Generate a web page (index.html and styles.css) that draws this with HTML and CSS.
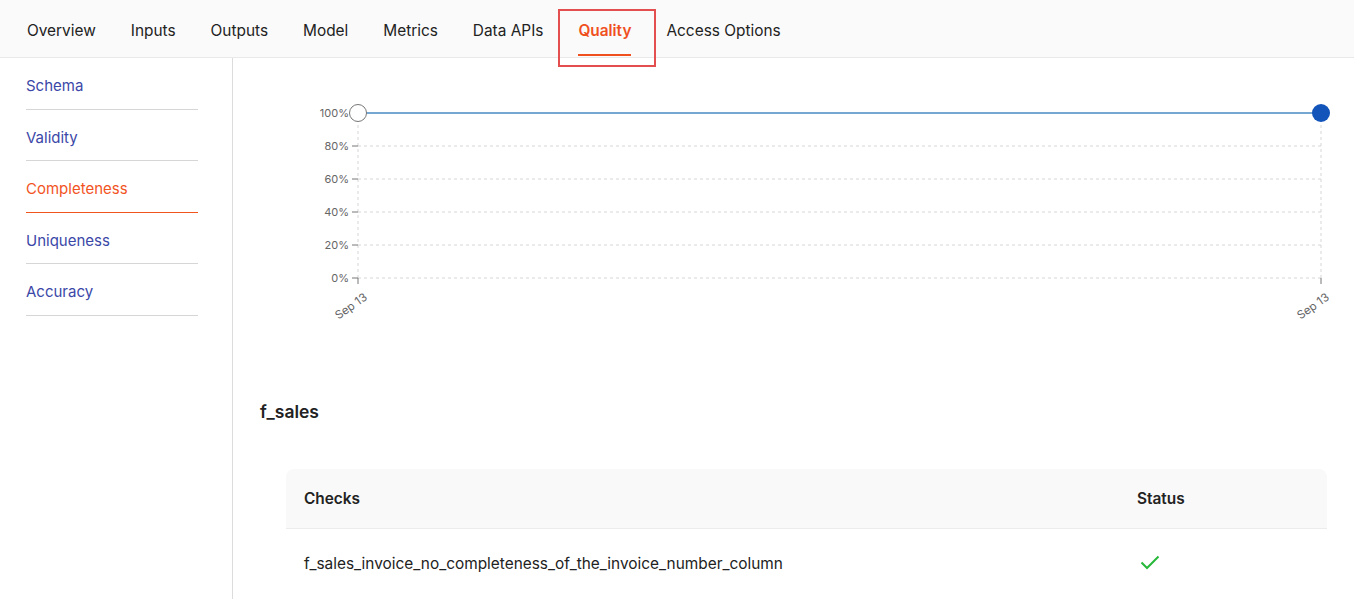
FILE: index.html
```html
<!DOCTYPE html>
<html>
<head>
<meta charset="utf-8">
<link rel="stylesheet" href="styles.css">
</head>
<body>
<nav class="tabs">
  <div class="tab">Overview</div>
  <div class="tab">Inputs</div>
  <div class="tab">Outputs</div>
  <div class="tab">Model</div>
  <div class="tab">Metrics</div>
  <div class="tab">Data APIs</div>
  <div class="tab active">Quality<span class="highlight"></span></div>
  <div class="tab">Access Options</div>
</nav>
<div class="layout">
  <aside class="sidebar">
    <div class="side-item">Schema</div>
    <div class="side-item">Validity</div>
    <div class="side-item active">Completeness</div>
    <div class="side-item">Uniqueness</div>
    <div class="side-item">Accuracy</div>
  </aside>
  <main class="main">
    <svg class="chart" width="1067" height="240" viewBox="0 0 1067 240">
      <g class="grid">
        <line x1="98" y1="56" x2="1061" y2="56"/>
        <line x1="98" y1="89" x2="1061" y2="89"/>
        <line x1="98" y1="122" x2="1061" y2="122"/>
        <line x1="98" y1="155" x2="1061" y2="155"/>
        <line x1="98" y1="188" x2="1061" y2="188"/>
        <line x1="98" y1="23" x2="98" y2="188"/>
        <line x1="1061" y1="23" x2="1061" y2="188"/>
      </g>
      <g class="ticks">
        <line x1="92" y1="56" x2="98" y2="56"/>
        <line x1="92" y1="89" x2="98" y2="89"/>
        <line x1="92" y1="122" x2="98" y2="122"/>
        <line x1="92" y1="155" x2="98" y2="155"/>
        <line x1="92" y1="188" x2="98" y2="188"/>
        <line x1="98" y1="188" x2="98" y2="194"/>
        <line x1="1061" y1="188" x2="1061" y2="194"/>
      </g>
      <g class="ylabels">
        <text x="89" y="27">100%</text>
        <text x="89" y="60">80%</text>
        <text x="89" y="93">60%</text>
        <text x="89" y="126">40%</text>
        <text x="89" y="159">20%</text>
        <text x="89" y="192">0%</text>
      </g>
      <g class="xlabels">
        <text x="108" y="209" transform="rotate(-35 108 209)">Sep 13</text>
        <text x="1070" y="209" transform="rotate(-35 1070 209)">Sep 13</text>
      </g>
      <line class="series" x1="98" y1="23" x2="1061" y2="23"/>
      <circle class="dot-open" cx="98" cy="23" r="8.5"/>
      <circle class="dot-fill" cx="1061" cy="23" r="9"/>
    </svg>
    <h2 class="section-title">f_sales</h2>
    <div class="table">
      <div class="row head">
        <div class="cell c-check">Checks</div>
        <div class="cell c-status">Status</div>
      </div>
      <div class="row">
        <div class="cell c-check">f_sales_invoice_no_completeness_of_the_invoice_number_column</div>
        <div class="cell c-status">
          <svg class="ok" width="20" height="16" viewBox="0 0 20 16"><path d="M1.5 7.5 L7 13 L18.5 1.5"/></svg>
        </div>
      </div>
    </div>
  </main>
</div>
</body>
</html>
```

FILE: styles.css
```css
* { box-sizing: border-box; }
html, body { margin: 0; padding: 0; }
body {
  font-family: Inter, "Noto Sans", sans-serif;
  color: #222;
  background: #fff;
  width: 1354px;
  height: 599px;
  overflow: hidden;
}
.tabs {
  display: flex;
  gap: 35px;
  height: 58px;
  padding-left: 27px;
  background: #fafafa;
  border-bottom: 1px solid #e9e9e9;
}
.tab {
  position: relative;
  font-size: 15.4px;
  line-height: 54px;
  padding-top: 4px;
  height: 57px;
  color: #222;
  white-space: nowrap;
}
.tab.active {
  color: #f0501e;
  font-weight: 600;
}
.tab.active::after {
  content: "";
  position: absolute;
  left: 0;
  right: 0;
  top: 54px;
  height: 2px;
  background: #f0501e;
}
.highlight {
  position: absolute;
  left: -20px;
  right: -25px;
  top: 9px;
  height: 58px;
  border: 2px solid #e34f4f;
  z-index: 2;
}
.layout {
  display: flex;
  height: 541px;
}
.sidebar {
  width: 233px;
  flex: none;
  border-right: 1px solid #dcdcdc;
  padding-left: 26px;
}
.side-item {
  width: 172px;
  font-size: 15px;
  line-height: 21px;
  padding: 17px 0 12.5px;
  color: #3b48a8;
  border-bottom: 1px solid #d6d6d6;
}
.side-item.active {
  color: #f2541f;
  border-bottom-color: #f2541f;
}
.main {
  flex: 1;
  padding: 0 27px;
  min-width: 0;
}
.chart {
  display: block;
  margin-top: 32px;
  overflow: visible;
}
.grid line {
  stroke: #d6d6d6;
  stroke-width: 1;
  stroke-dasharray: 3 3;
}
.ticks line {
  stroke: #777;
  stroke-width: 1;
}
.ylabels text {
  font-size: 11px;
  fill: #666;
  text-anchor: end;
  font-family: Inter, sans-serif;
}
.xlabels text {
  font-size: 11.5px;
  fill: #666;
  text-anchor: end;
  font-family: Inter, sans-serif;
}
.series {
  stroke: #76a6d2;
  stroke-width: 2;
}
.dot-open {
  fill: #fff;
  stroke: #777;
  stroke-width: 1;
}
.dot-fill {
  fill: #1254b9;
}
.section-title {
  margin: 71px 0 0;
  font-size: 17.5px;
  font-weight: 600;
  line-height: 22px;
  color: #222;
}
.table {
  margin: 46px 0 0 26px;
}
.row {
  display: flex;
}
.row.head {
  background: #f9f9f9;
  border-radius: 8px 8px 0 0;
  height: 60px;
  align-items: center;
  font-weight: 600;
  border-bottom: 1px solid #ececec;
}
.row:not(.head) {
  height: 68px;
  align-items: center;
}
.cell {
  font-size: 15.4px;
  padding-left: 18px;
}
.c-check { width: 833px; flex: none; }
.c-status { flex: 1; }
.ok {
  display: block;
  margin-left: 3px;
}
.ok path {
  fill: none;
  stroke: #27b83a;
  stroke-width: 2;
}
```
